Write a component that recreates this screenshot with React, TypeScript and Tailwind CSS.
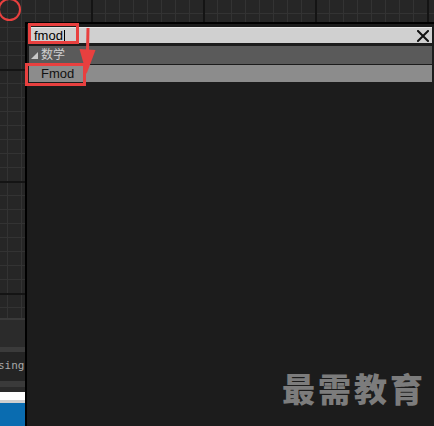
function RedArrow() {
  return (
    <svg className="absolute left-[78px] top-[26px]" width="20" height="50" viewBox="0 0 20 50">
      <line x1="10" y1="2" x2="9.5" y2="26" stroke="#e8403f" strokeWidth="3" />
      <polygon points="1.5,23 17.5,24 8.5,48" fill="#e8403f" />
    </svg>
  );
}

function CloseIcon() {
  return (
    <svg width="12" height="12" viewBox="0 0 12 12">
      <path d="M1 1 L11 11 M11 1 L1 11" stroke="#111" strokeWidth="2" strokeLinecap="square" />
    </svg>
  );
}

function Canvas() {
  return (
    <div className="flex h-[426px] w-[434px] flex-col bg-[#262626]">
      {/* graph grid */}
      <div className="flex-1 bg-[linear-gradient(to_right,#141414_2px,transparent_2px),linear-gradient(to_bottom,#141414_2px,transparent_2px),linear-gradient(to_right,#333333_1px,transparent_1px),linear-gradient(to_bottom,#333333_1px,transparent_1px)] bg-size-[112px_112px,112px_112px,14px_14px,14px_14px] bg-position-[91px_69px,91px_69px,7px_13px,7px_13px]" />

      {/* output log peeking out under the popup */}
      <div className="flex h-[108px] flex-col">
        <div className="h-[2px] bg-[#3a3a3a]" />
        <div className="h-[27px] bg-[#2b2b2b]" />
        <div className="h-[5px] bg-[#3b3b3b]" />
        <div className="flex h-[29px] items-center overflow-hidden bg-[#242424]">
          <span className="-ml-[2px] whitespace-nowrap font-['DejaVu_Sans_Mono',monospace] text-[11px] text-[#a8a8a8]">sing</span>
        </div>
        <div className="h-[6px] bg-[#3a3a3a]" />
        <div className="h-[5px] bg-[#2a2a2a]" />
        <div className="h-[8px] bg-white" />
        <div className="h-[3px] bg-[#cfcfcf]" />
        <div className="flex-1 bg-[#0a6cb0]" />
      </div>
    </div>
  );
}

export default function App() {
  return (
    <div className="relative h-[426px] w-[434px] overflow-hidden font-['Liberation_Sans','Noto_Sans_CJK_SC',sans-serif]">
      <Canvas />

      {/* highlight circle */}
      <div className="absolute -left-[2px] -top-[2px] h-[23px] w-[23px] rounded-full border-2 border-[#e8403f]" />

      {/* action search popup */}
      <div className="absolute bottom-0 left-[25px] right-0 top-[22px] border-l-2 border-t-2 border-black bg-[#1c1c1c]">
        <div className="flex flex-col pl-[2px] pr-[2px] pt-[3px]">
          <div className="flex h-[16px] items-center border-t border-[#e6e6e6] bg-[#d0d0d0] pl-[5px] pr-[3px]">
            <span className="text-[13px] leading-none text-black">fmod</span>
            <span className="ml-[1px] h-[12px] w-px bg-black" />
            <div className="flex-1" />
            <CloseIcon />
          </div>

          <div className="mt-[3px] flex h-[18px] items-center bg-[#5a5a5a] pl-[2px]">
            <svg width="7" height="7" viewBox="0 0 7 7" className="mr-[3px]">
              <polygon points="7,0 7,7 0,7" fill="#c8c8c8" />
            </svg>
            <span className="text-[12px] leading-none text-[#cfcfcf]">数学</span>
          </div>

          <div className="mt-px flex h-[17px] items-center bg-[#8c8c8c] pl-[12px]">
            <span className="text-[13px] leading-none text-[#111]">Fmod</span>
          </div>
        </div>

        <div className="absolute bottom-[21px] right-[8px] font-['Noto_Sans_CJK_SC',sans-serif] text-[33px] font-black leading-none tracking-[3px] text-[#7c7c7c]">
          最需教育
        </div>
      </div>

      {/* annotation boxes */}
      <div className="absolute left-[28px] top-[23px] h-[21px] w-[51px] border-[3px] border-[#e8403f]" />
      <div className="absolute left-[25px] top-[63px] h-[23px] w-[61px] border-[3px] border-[#e8403f]" />
      <RedArrow />
    </div>
  );
}
